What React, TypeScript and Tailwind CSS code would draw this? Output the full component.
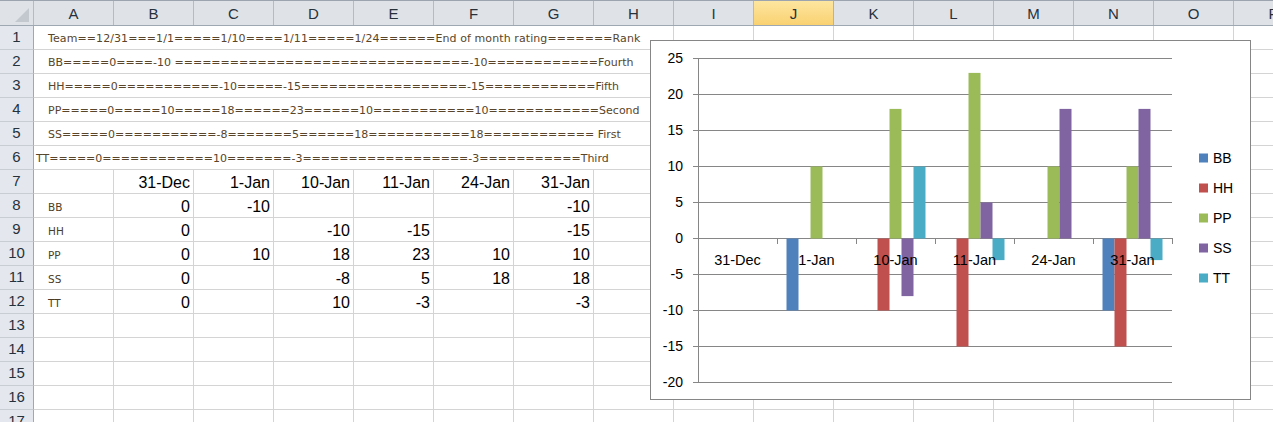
import React from "react";

const COLS = ["A", "B", "C", "D", "E", "F", "G", "H", "I", "J", "K", "L", "M", "N", "O", "P"];
const eq = (n: number) => "=".repeat(n);

// free-text notes typed into column A, spilling over to H
const NOTES = [
  { text: "Team==12/31===1/1=====1/10====1/11=====1/24======End of month rating=======Rank", indent: true, wide: true },
  { text: `BB=====0====-10 ${eq(32)}-10${eq(12)}Fourth`, indent: true, wide: false },
  { text: `HH=====0${eq(11)}-10=====-15${eq(18)}-15${eq(12)}Fifth`, indent: true, wide: false },
  { text: `PP=====0=====10=====18======23======10${eq(11)}10${eq(12)}Second`, indent: true, wide: false },
  { text: `SS=====0${eq(11)}-8=======5${eq(6)}18${eq(11)}18${eq(12)} First`, indent: true, wide: false },
  { text: `TT=====0${eq(12)}10${eq(7)}-3${eq(18)}-3${eq(11)}Third`, indent: false, wide: false },
];

const DATES = ["31-Dec", "1-Jan", "10-Jan", "11-Jan", "24-Jan", "31-Jan"];

const SERIES: { name: string; color: string; values: (number | null)[] }[] = [
  { name: "BB", color: "#4f81bd", values: [0, -10, null, null, null, -10] },
  { name: "HH", color: "#c0504d", values: [0, null, -10, -15, null, -15] },
  { name: "PP", color: "#9bbb59", values: [0, 10, 18, 23, 10, 10] },
  { name: "SS", color: "#8064a2", values: [0, null, -8, 5, 18, 18] },
  { name: "TT", color: "#4bacc6", values: [0, null, 10, -3, null, -3] },
];

function RowHeader({ n }: { n: number }) {
  return (
    <div className="flex h-full w-[34px] shrink-0 items-center justify-center border-b border-r border-b-[#c8cdd4] border-r-[#9ea8b3] bg-[#e4e8ee] text-[15px] text-[#27313c]">
      {n}
    </div>
  );
}

function Cell({ children }: { children?: React.ReactNode }) {
  return (
    <div className="flex h-full w-[80px] shrink-0 items-end justify-end border-b border-r border-[#d4d4d4] pb-[1px] pr-[3px] text-[16px] leading-[18px] text-black">
      {children}
    </div>
  );
}

function ColumnHeaders() {
  return (
    <div className="flex h-[26px] border-b border-t border-b-[#9ea8b3] border-t-[#9ca5af] bg-[#dfe3e8]">
      <div className="relative h-full w-[34px] shrink-0 border-r border-[#b4bbc4]">
        <svg width="33" height="24" className="absolute left-0 top-0">
          <polygon points="15,21 29,7 29,21" fill="#c3c8cf" />
        </svg>
      </div>
      {COLS.map((c) => (
        <div
          key={c}
          className={`flex h-full w-[80px] shrink-0 items-center justify-center border-r pt-[2px] text-[15px] text-[#27313c] ${
            c === "J"
              ? "border-[#e2ac4f] bg-linear-to-b from-[#fde6a0] to-[#f9d170]"
              : "border-[#b4bbc4]"
          }`}
        >
          {c}
        </div>
      ))}
    </div>
  );
}

function Chart() {
  const zero = 197;
  const unit = 7.2;
  const left = 47;
  const catW = 79;
  const grid = [25, 20, 15, 10, 5, 0, -5, -10, -15, -20];

  return (
    <div className="absolute left-[650px] top-[40px] h-[360px] w-[601px] border border-[#868686] bg-white">
      <svg width="599" height="358" className="font-['Liberation_Sans',Arial,sans-serif]">
        {grid.map((v) => {
          const y = zero - v * unit;
          return (
            <g key={v}>
              <line x1={42} x2={521} y1={y + 0.5} y2={y + 0.5} stroke="#868686" strokeWidth={1} />
              <text x={32} y={y + 5} textAnchor="end" fontSize={14} fill="#000">
                {v}
              </text>
            </g>
          );
        })}
        <line x1={left + 0.5} x2={left + 0.5} y1={17} y2={342} stroke="#868686" strokeWidth={1} />
        {Array.from({ length: 7 }).map((_, k) => (
          <line
            key={k}
            x1={left + k * catW + 0.5}
            x2={left + k * catW + 0.5}
            y1={zero}
            y2={zero + 6}
            stroke="#868686"
            strokeWidth={1}
          />
        ))}
        {SERIES.map((s, i) =>
          s.values.map((v, c) => {
            if (v === null || v === 0) return null;
            const x = left + c * catW + 9.5 + i * 12;
            const h = Math.abs(v) * unit;
            const y = v > 0 ? zero - h + 0.5 : zero + 0.5;
            return <rect key={`${s.name}-${c}`} x={x} y={y} width={12} height={h} fill={s.color} />;
          })
        )}
        {DATES.map((d, c) => (
          <text key={d} x={left + c * catW + catW / 2} y={224} textAnchor="middle" fontSize={14.5} fill="#000">
            {d}
          </text>
        ))}
        {SERIES.map((s, i) => {
          const cy = 117 + i * 30;
          return (
            <g key={s.name}>
              <rect x={548} y={cy - 4.5} width={9} height={9} fill={s.color} />
              <text x={562} y={cy + 5} fontSize={14} fill="#000">
                {s.name}
              </text>
            </g>
          );
        })}
      </svg>
    </div>
  );
}

export default function App() {
  const table: string[][] = [
    ["", ...DATES],
    ...SERIES.map((s) => [s.name, ...s.values.map((v) => (v === null ? "" : String(v)))]),
  ];

  return (
    <div className="relative h-[422px] w-[1273px] overflow-hidden bg-white font-['Liberation_Sans',Arial,sans-serif]">
      <ColumnHeaders />

      {NOTES.map((note, r) => (
        <div key={r} className="flex h-[24px]">
          <RowHeader n={r + 1} />
          <div
            className={`flex h-full w-[640px] shrink-0 items-end whitespace-pre border-b border-r border-[#d4d4d4] pb-[3px] font-['DejaVu_Sans',sans-serif] text-[11px] leading-[14px] text-[#58452a] ${
              note.indent ? "pl-[14px]" : "pl-[2px]"
            } ${note.wide ? "tracking-[0.09px]" : ""}`}
          >
            {note.text}
          </div>
          {COLS.slice(8).map((c) => (
            <Cell key={c} />
          ))}
        </div>
      ))}

      {Array.from({ length: 11 }).map((_, i) => {
        const rowNo = i + 7;
        const values = table[i] ?? [];
        return (
          <div key={rowNo} className="flex h-[24px]">
            <RowHeader n={rowNo} />
            {COLS.map((c, ci) =>
              ci === 0 && values[0] ? (
                <div
                  key={c}
                  className="flex h-full w-[80px] shrink-0 items-end border-b border-r border-[#d4d4d4] pb-[3px] pl-[14px] font-['DejaVu_Sans',sans-serif] text-[10.5px] leading-[14px] text-[#4a3c26]"
                >
                  {values[0]}
                </div>
              ) : (
                <Cell key={c}>{ci > 0 ? values[ci] : null}</Cell>
              )
            )}
          </div>
        );
      })}

      <Chart />
    </div>
  );
}
